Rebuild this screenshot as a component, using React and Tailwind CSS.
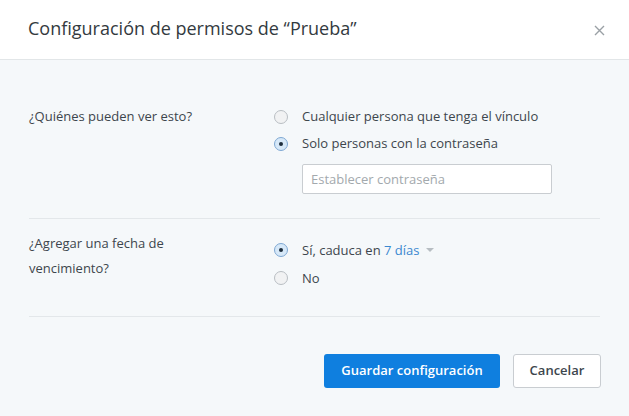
import { useState } from "react";

function Radio({ checked }) {
  return (
    <span
      className={`flex h-[14px] w-[14px] shrink-0 items-center justify-center rounded-full border ${
        checked ? "border-[#7fa8d3] bg-[#d6e8f8]" : "border-[#b9bec3] bg-[#f1f2f3]"
      }`}
    >
      {checked && <span className="h-[4px] w-[4px] rounded-full bg-[#1d2d3d]" />}
    </span>
  );
}

function Option({ checked, children }) {
  return (
    <div className="flex items-center gap-[14px]">
      <Radio checked={checked} />
      <span>{children}</span>
    </div>
  );
}

export default function App() {
  const [password, setPassword] = useState("");

  return (
    <div className="flex h-[416px] w-[629px] flex-col bg-[#f5f8fa] font-['Open_Sans',sans-serif] text-[13px] text-[#3d464d]">
      <header className="flex h-[60px] shrink-0 items-center justify-between border-b border-[#e2e6e8] bg-white pl-[28px] pr-[24px]">
        <h1 className="pb-[2px] text-[18px] text-[#333a40]">Configuración de permisos de “Prueba”</h1>
        <svg width="11" height="11" viewBox="0 0 11 11" className="mt-[1px]">
          <path d="M1 1L10 10M10 1L1 10" stroke="#9aa0a5" strokeWidth="1.4" />
        </svg>
      </header>

      <div className="px-[29px]">
        <section className="flex border-b border-[#e3e7ea] pb-[24px] pt-[43px]">
          <p className="w-[245px] leading-[27px]">¿Quiénes pueden ver esto?</p>
          <div className="flex flex-col leading-[27px]">
            <Option>Cualquier persona que tenga el vínculo</Option>
            <Option checked>Solo personas con la contraseña</Option>
            <input
              value={password}
              onChange={(event) => setPassword(event.target.value)}
              placeholder="Establecer contraseña"
              className="ml-[28px] mt-[7px] h-[30px] w-[250px] rounded-[2px] border border-[#c9cdd1] bg-white px-[8px] text-[13px] text-[#3d464d] outline-none placeholder:text-[#a3a9ad]"
            />
          </div>
        </section>

        <section className="flex border-b border-[#e3e7ea] pb-[24px] pt-[12px]">
          <p className="w-[245px] leading-[25px]">
            ¿Agregar una fecha de
            <br />
            vencimiento?
          </p>
          <div className="mt-[5px] flex flex-col leading-[28px]">
            <Option checked>
              Sí, caduca en <span className="text-[#3b88d0]">7 días</span>
              <span className="ml-[7px] inline-block translate-y-[-2px] border-x-[4px] border-t-[4px] border-x-transparent border-t-[#b7bdc2] align-middle" />
            </Option>
            <Option>No</Option>
          </div>
        </section>
      </div>

      <div className="flex justify-end gap-[13px] pr-[28px] pt-[37px]">
        <button className="h-[34px] w-[176px] rounded-[3px] bg-[#0f7fdf] text-[13px] font-semibold text-white">
          Guardar configuración
        </button>
        <button className="h-[34px] w-[88px] rounded-[3px] border border-[#c9cdd1] bg-white text-[13px] font-semibold text-[#3d464d]">
          Cancelar
        </button>
      </div>
    </div>
  );
}
